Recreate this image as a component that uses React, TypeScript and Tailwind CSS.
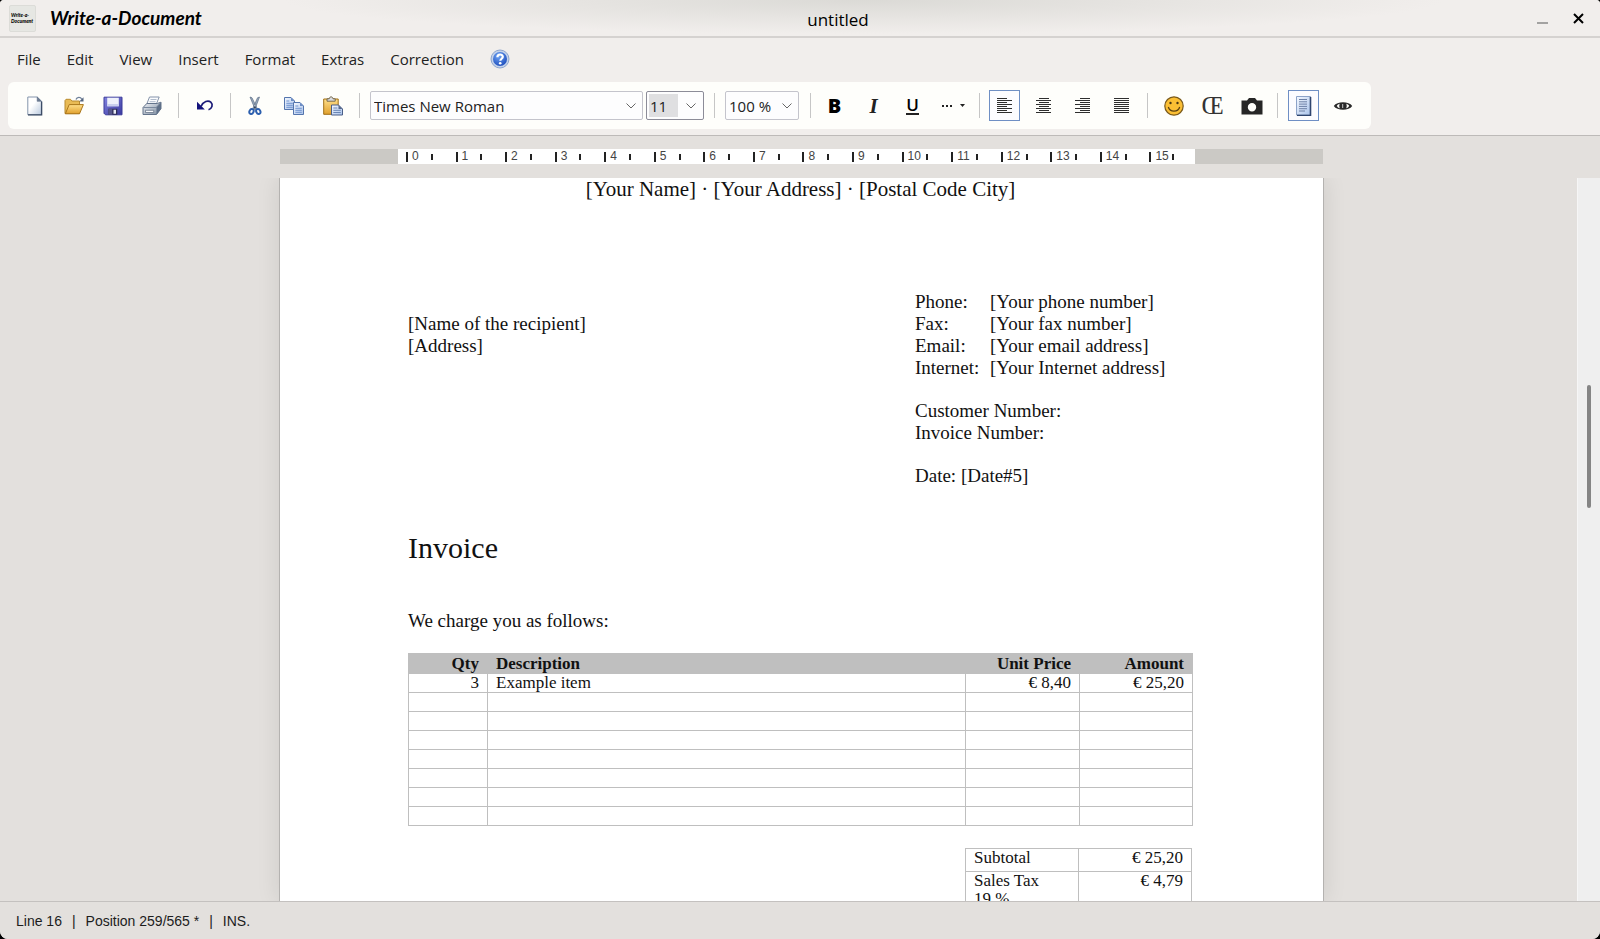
import { useState } from 'react'
import type { ReactNode } from 'react'

const MENUS = ['File', 'Edit', 'View', 'Insert', 'Format', 'Extras', 'Correction']

const CONTACT = [
  ['Phone:', '[Your phone number]'],
  ['Fax:', '[Your fax number]'],
  ['Email:', '[Your email address]'],
  ['Internet:', '[Your Internet address]'],
]

const ITEMS = [
  { qty: '3', description: 'Example item', price: '€ 8,40', amount: '€ 25,20' },
  ...Array.from({ length: 7 }, () => ({ qty: '', description: '', price: '', amount: '' })),
]

// ---- toolbar icons (20x20 grid) ----

function Icon({ children }: { children: ReactNode }) {
  return (
    <svg viewBox="0 0 20 20" className="h-5 w-5 shrink-0" fill="none" aria-hidden>
      {children}
    </svg>
  )
}

function IconDefs() {
  return (
    <svg className="absolute h-0 w-0" aria-hidden>
      <defs>
        <linearGradient id="paper" x1="0" y1="0" x2="1" y2="1">
          <stop offset="0.4" stopColor="#ffffff" />
          <stop offset="1" stopColor="#b9c9de" />
        </linearGradient>
        <linearGradient id="sheet" x1="0" y1="0" x2="1" y2="1">
          <stop offset="0" stopColor="#f4f8ff" />
          <stop offset="1" stopColor="#a9c2ea" />
        </linearGradient>
        <linearGradient id="gold" x1="0" y1="0" x2="0" y2="1">
          <stop offset="0" stopColor="#ffdf8a" />
          <stop offset="1" stopColor="#e0a02c" />
        </linearGradient>
        <linearGradient id="disk" x1="0" y1="0" x2="1" y2="1">
          <stop offset="0" stopColor="#8283e0" />
          <stop offset="1" stopColor="#3a3a9e" />
        </linearGradient>
        <linearGradient id="metal" x1="0" y1="0" x2="1" y2="1">
          <stop offset="0" stopColor="#f4f6f9" />
          <stop offset="1" stopColor="#75869b" />
        </linearGradient>
        <radialGradient id="help" cx="0.4" cy="0.3" r="0.8">
          <stop offset="0" stopColor="#6fa4f4" />
          <stop offset="1" stopColor="#1746b8" />
        </radialGradient>
      </defs>
    </svg>
  )
}

function HelpIcon() {
  return (
    <Icon>
      <circle cx="10" cy="10" r="9" fill="#c3d2ea" stroke="#8ea6cf" />
      <circle cx="10" cy="10" r="7" fill="url(#help)" />
      <path d="M7.4 8.2c0-3.6 5.4-3.5 5.4-.4 0 1.9-2.5 2-2.5 4" stroke="#fff" strokeWidth="2.2" />
      <circle cx="10.2" cy="14.2" r="1.3" fill="#fff" />
    </Icon>
  )
}

function NewIcon() {
  return (
    <Icon>
      <path d="M2.8 1h9.4l4.3 4.3v13.4H2.8z" fill="url(#paper)" stroke="#8494ab" />
      <path d="M16.600 5.500v13.400H3" stroke="#3c4c66" strokeWidth="1.400" />
      <path d="M12.200 1v4.300h4.300z" fill="#6b7b92" stroke="#5d6d86" strokeWidth="0.600" />
    </Icon>
  )
}

function OpenIcon() {
  return (
    <Icon>
      <path d="M1 17.500V4.500l1-1.200h4.500l1.300 1.700h7.700v12.500z" fill="#e9bb55" stroke="#b98b2f" />
      <path d="M1.300 17.800L5.200 8.600h14.200l-3.900 9.200z" fill="url(#gold)" stroke="#a9751a" />
      <path d="M12 3.400c1-2.600 4.500-2.700 5.800-.2" stroke="#6d7f99" strokeWidth="1.300" />
      <path d="M19.500 1.200v4.200h-4.200z" fill="#53647f" />
    </Icon>
  )
}

function SaveIcon() {
  return (
    <Icon>
      <path d="M1 1.200h18v17.600H2.500L1 17.300z" fill="url(#disk)" stroke="#3b3b9a" />
      <path d="M4.200 1.700h11.600v8.600H4.200z" fill="#eef1fb" />
      <path d="M4.200 8h11.600v2.300H4.200z" fill="#c9cfee" />
      <path d="M5.500 12.800h8.800v6H5.500z" fill="#2d2d55" />
      <path d="M10.500 13.800h2.500v4h-2.500z" fill="#e6e8f3" />
      <path d="M5.500 12.800h3.800v6H5.500z" fill="#56568c" />
    </Icon>
  )
}

function PrintIcon() {
  return (
    <Icon>
      <path d="M7.500 1h9.700l-3 7.500H4.600z" fill="#fbfcfe" stroke="#8593a9" />
      <path d="M8.500 3.500h6M7.600 5.700h6" stroke="#a7b3c5" strokeWidth="0.900" />
      <path d="M1 11.500l3.800-4h10.400l3.800-1.300v6.500l-4.500 5.800H1z" fill="url(#metal)" stroke="#64748b" />
      <path d="M1.300 11.500h12.900l4.500-5" stroke="#7a899e" />
      <path d="M14.500 11.500v7l4.500-5.700V6.500z" fill="#5e6f87" />
      <path d="M3.500 14.300h8.200v2.200H3.500z" fill="#f8fafc" stroke="#5c6a80" strokeWidth="0.700" />
    </Icon>
  )
}

function UndoIcon() {
  return (
    <Icon>
      <path d="M6 10.500C8.200 5.300 13.200 4 15.800 6.200c2.600 2.500 1.200 6.600-2.300 7.500" stroke="#1c1c78" strokeWidth="1.700" />
      <path d="M2 5.800v7.800h7.800z" fill="#13137c" />
    </Icon>
  )
}

function CutIcon() {
  return (
    <Icon>
      <path d="M5 1l2 .8 5.200 10.700-2 .9zM14.500 1l-2 .8-4.700 10.700 2 .9z" fill="#9aaabd" stroke="#5c6e86" strokeWidth="0.700" />
      <ellipse cx="6.500" cy="15.500" rx="2" ry="2.600" stroke="#2c5fae" strokeWidth="2" transform="rotate(25 6.500 15.500)" />
      <ellipse cx="13.300" cy="15.500" rx="2" ry="2.600" stroke="#2c5fae" strokeWidth="2" transform="rotate(-25 13.300 15.500)" />
      <circle cx="9.900" cy="11.300" r="1" fill="#31435f" />
    </Icon>
  )
}

function Sheet({ x, y }: { x: number; y: number }) {
  return (
    <g transform={`translate(${x} ${y})`}>
      <path d="M0.500 0.500h6.500l3.500 3.500v8.500H0.500z" fill="url(#sheet)" stroke="#5475ad" />
      <path d="M7 0.500V4h3.500z" fill="#6c8dc4" />
      <path d="M2.300 4h3M2.300 6.300h6.500M2.300 8.300h6.500M2.300 10.300h6.500" stroke="#6f93cf" strokeWidth="1" />
    </g>
  )
}

function CopyIcon() {
  return (
    <Icon>
      <Sheet x={0} y={1} />
      <Sheet x={9} y={6} />
    </Icon>
  )
}

function PasteIcon() {
  return (
    <Icon>
      <path d="M0.700 3h14.500v15.300H0.700z" fill="url(#gold)" stroke="#a06f15" />
      <path d="M4 5.200V2.800h2.200C6.500.2 9.700.2 10 2.800h2.200v2.400z" fill="#d9dbe0" stroke="#6c5e3e" strokeWidth="0.900" />
      <path d="M8.500 9h7l4 4v6h-11z" fill="url(#sheet)" stroke="#4a5f88" />
      <path d="M10.300 12h4M10.300 14.300h7.500M10.300 16.500h7.500" stroke="#6a86b5" />
      <path d="M15.500 9v4h4z" fill="#56698c" />
    </Icon>
  )
}

const LINE_YS = [3, 5, 7, 9, 11, 13, 15, 17]

function AlignIcon({ align }: { align: 'left' | 'center' | 'right' | 'justify' }) {
  return (
    <svg viewBox="0 0 20 20" className="h-5 w-5 shrink-0" shapeRendering="crispEdges" aria-hidden>
      {LINE_YS.map((y, i) => {
        const w = align === 'justify' || i % 2 === 1 ? 15 : 10
        const x = align === 'center' ? (w === 15 ? 2 : 5) : align === 'right' ? 17 - w : 2
        return <rect key={y} x={x} y={y - 1} width={w} height={1} fill="#2e2e2e" />
      })}
    </svg>
  )
}

function SmileyIcon() {
  return (
    <Icon>
      <circle cx="10" cy="10" r="9.200" fill="#fbbf34" stroke="#7a5a1c" strokeWidth="1.200" />
      <circle cx="6.500" cy="7" r="1.200" fill="#4a3511" />
      <circle cx="13.500" cy="7" r="1.200" fill="#4a3511" />
      <path d="M4.300 11c1.700 5.600 9.700 5.600 11.400 0" stroke="#5d4211" strokeWidth="1.300" />
    </Icon>
  )
}

function CameraIcon() {
  return (
    <svg viewBox="0 0 22 18" className="h-[18px] w-[22px]" aria-hidden>
      <path
        fillRule="evenodd"
        fill="#262626"
        d="M0.500 3.500h5.500L8 1h6l2 2.500h5.500v14H0.500zM11 6a4.200 4.200 0 1 0 0 8.400a4.200 4.200 0 1 0 0-8.400z"
      />
    </svg>
  )
}

function PageViewIcon() {
  return (
    <Icon>
      <path d="M2.500 0.500h14v18.500h-14z" fill="url(#sheet)" stroke="#8da3c8" />
      <path d="M16.500 1v18.500H3" stroke="#2f456f" strokeWidth="1.600" />
      <path d="M5 3.500h8M5 5.800h8M5 8.100h8M5 10.400h8M5 12.700h8M5 15h6" stroke="#6d80a6" strokeWidth="1" />
    </Icon>
  )
}

function EyeIcon() {
  return (
    <Icon>
      <path d="M0.800 10C4 5 16 5 19.200 10 16 15 4 15 0.800 10z" fill="#2a2a2a" />
      <path d="M3.800 10c.8-1.300 1.800-1.900 3-2.200-.7 1.400-.7 3 0 4.400-1.200-.3-2.200-.9-3-2.200zM16.200 10c-.8-1.300-1.800-1.900-3-2.200.7 1.400.7 3 0 4.400 1.200-.3 2.200-.9 3-2.200z" fill="#fefefb" />
      <path d="M9.700 8v4" stroke="#c9c9c9" />
    </Icon>
  )
}

function Chevron() {
  return (
    <svg viewBox="0 0 10 6" className="h-[6px] w-[10px] shrink-0" fill="none" aria-hidden>
      <path d="M0.500 0.500L5 5l4.500-4.500" stroke="#666" />
    </svg>
  )
}

// ---- toolbar parts ----

function ToolButton({ label, active, children }: { label: string; active?: boolean; children: ReactNode }) {
  return (
    <button
      type="button"
      title={label}
      aria-label={label}
      className={`flex h-[31px] w-[31px] shrink-0 items-center justify-center border ${active ? 'border-[#6f8fc4] bg-[#fcfcff]' : 'border-transparent hover:bg-[#f0f0f4]'}`}
    >
      {children}
    </button>
  )
}

function Group({ children }: { children: ReactNode }) {
  return <div className="flex items-center gap-2">{children}</div>
}

function Separator({ className = 'mx-[10px]' }: { className?: string }) {
  return <div className={`h-[25px] w-px shrink-0 bg-[#c6c6c6] ${className}`} />
}

function DropDown({ label, options, className }: { label: string; options: string[]; className: string }) {
  return (
    <div className={`relative h-[29px] shrink-0 ${className}`}>
      <select
        aria-label={label}
        className="h-full w-full appearance-none rounded-[2px] border border-[#c4c4cc] bg-[#fdfdfe] pt-[2px] pl-[3px] text-[15px] text-[#222] outline-none"
      >
        {options.map(o => <option key={o}>{o}</option>)}
      </select>
      <span className="pointer-events-none absolute inset-y-0 right-[7px] flex items-center"><Chevron /></span>
    </div>
  )
}

function Toolbar() {
  const [size, setSize] = useState('11')
  return (
    <div className="mx-2 mb-[6px] flex h-[47px] w-fit items-center rounded-md bg-[#fefefb] pr-[13px] pl-[11px]">
      <Group>
        <ToolButton label="New"><NewIcon /></ToolButton>
        <ToolButton label="Open"><OpenIcon /></ToolButton>
        <ToolButton label="Save"><SaveIcon /></ToolButton>
        <ToolButton label="Print"><PrintIcon /></ToolButton>
      </Group>
      <Separator className="mr-[10px] ml-[11px]" />
      <ToolButton label="Undo"><UndoIcon /></ToolButton>
      <Separator className="mr-2 ml-[10px]" />
      <Group>
        <ToolButton label="Cut"><CutIcon /></ToolButton>
        <ToolButton label="Copy"><CopyIcon /></ToolButton>
        <ToolButton label="Paste"><PasteIcon /></ToolButton>
      </Group>
      <Separator className="mr-[10px] ml-[11px]" />
      <div className="flex items-center gap-[3px]">
        <DropDown label="Font" options={['Times New Roman']} className="w-[273px]" />
        <div className="flex h-[29px] w-[58px] items-center justify-between rounded-[2px] border border-[#8c8c98] bg-[#fdfdfe] pr-[7px] pl-[2px]">
          <input
            aria-label="Font size"
            value={size}
            onChange={e => setSize(e.target.value)}
            className="h-[23px] w-[29px] bg-[#dfdfe1] pl-px text-[15px] text-[#222] outline-none"
          />
          <button type="button" aria-label="Choose font size"><Chevron /></button>
        </div>
      </div>
      <Separator />
      <DropDown label="Zoom" options={['100 %']} className="w-[74px]" />
      <Separator className="mr-2 ml-[11px]" />
      <Group>
        <ToolButton label="Bold"><span className="text-[20px] leading-5 font-extrabold">B</span></ToolButton>
        <ToolButton label="Italic">
          <span className="font-['Liberation_Serif',serif] text-[21px] leading-5 font-bold text-[#222] italic">I</span>
        </ToolButton>
        <ToolButton label="Underline">
          <span className="border-b-2 border-[#222] text-[17px] leading-4 font-semibold">U</span>
        </ToolButton>
        <button type="button" aria-label="More formats" className="flex h-[31px] w-[35px] items-center justify-center gap-2">
          <svg viewBox="0 0 10 2" className="h-[2px] w-[10px]" aria-hidden>
            <path d="M0 0h2v2H0zM4 0h2v2H4zM8 0h2v2H8z" fill="#222" />
          </svg>
          <svg viewBox="0 0 5 3" className="h-[3px] w-[5px]" aria-hidden><path d="M0 0h5L2.500 3z" fill="#222" /></svg>
        </button>
      </Group>
      <Separator className="mr-[9px] ml-2" />
      <Group>
        <ToolButton label="Align left" active><AlignIcon align="left" /></ToolButton>
        <ToolButton label="Align center"><AlignIcon align="center" /></ToolButton>
        <ToolButton label="Align right"><AlignIcon align="right" /></ToolButton>
        <ToolButton label="Justify"><AlignIcon align="justify" /></ToolButton>
      </Group>
      <Separator />
      <Group>
        <ToolButton label="Insert emoji"><SmileyIcon /></ToolButton>
        <ToolButton label="Insert symbol">
          <span className="font-['Liberation_Serif',serif] text-[25px] leading-6 text-[#333]">Œ</span>
        </ToolButton>
        <ToolButton label="Insert picture"><CameraIcon /></ToolButton>
      </Group>
      <Separator />
      <Group>
        <ToolButton label="Page view" active><PageViewIcon /></ToolButton>
        <ToolButton label="Preview"><EyeIcon /></ToolButton>
      </Group>
    </div>
  )
}

function TitleBar() {
  return (
    <header className="grid h-[38px] shrink-0 grid-cols-[1fr_auto_1fr] items-center border-b-2 border-[#d5d2d0] bg-[radial-gradient(580px_34px_at_54%_0,#dbdad6,#f1eeec)] pr-4 pl-[9px]">
      <div className="flex items-center gap-[14px]">
        <span className="flex h-[27px] w-[27px] flex-col justify-center rounded-[2px] border border-[#dcdcd8] bg-[#e6e7e3] pl-px font-['Lato',sans-serif] text-[5px] leading-[6px] font-black italic" aria-hidden>
          <span>Write-a-</span>
          <span>Document</span>
        </span>
        <h1 className="font-['Lato',sans-serif] text-[19px] leading-6 font-bold italic">Write-a-Document</h1>
      </div>
      <p className="pt-[3px] pl-[83px] text-[17px] leading-6 font-medium">untitled</p>
      <div className="flex items-center justify-end gap-[25px]">
        <button type="button" aria-label="Minimize">
          <svg viewBox="0 0 11 12" className="h-3 w-[11px]" aria-hidden><path d="M0 11h11" stroke="#888" strokeWidth="1.500" /></svg>
        </button>
        <button type="button" aria-label="Close">
          <svg viewBox="0 0 11 11" className="h-[11px] w-[11px]" aria-hidden>
            <path d="M1 1l9 9M10 1l-9 9" stroke="#000" strokeWidth="2" />
          </svg>
        </button>
      </div>
    </header>
  )
}

function MenuBar() {
  return (
    <nav className="flex h-[44px] shrink-0 items-center gap-[26px] pb-[2px] pl-[17px]">
      {MENUS.map(m => (
        <button key={m} type="button" className="text-[15px] leading-5 text-[#222]">{m}</button>
      ))}
      <button type="button" aria-label="Help"><HelpIcon /></button>
    </nav>
  )
}

// One cell per centimetre; the last one is cut off by the right margin.
function Ruler() {
  return (
    <div className="flex h-[15px] shrink-0 bg-[#cbc9c5] pr-32 pl-[118px]">
      <div className="grid flex-1 grid-cols-[repeat(15,100fr)_92fr] bg-white pl-2">
        {Array.from({ length: 16 }, (_, i) => (
          <div key={i} className="flex min-w-0 items-center">
            <div className="flex w-1/2 items-center gap-[4px]">
              <span className="h-[10px] w-[2px] bg-[#222]" />
              <span className="font-['Liberation_Sans',sans-serif] text-[12px] leading-[15px] text-[#444]">{i}</span>
            </div>
            <span className="h-[6px] w-[2px] bg-[#222]" />
          </div>
        ))}
      </div>
    </div>
  )
}

function Letter() {
  const cell = 'border border-[#bfbfbf] px-2 py-0'
  return (
    <article className="flex-1 border-x border-[#b4b2b0] bg-white pr-[130px] pl-[128px] font-['Liberation_Serif',serif] text-[19px] leading-[22px] text-[#111] shadow-[0_0_22px_rgba(0,0,0,0.1)]">
      <p className="text-center text-[21px]">[Your Name] · [Your Address] · [Postal Code City]</p>

      <div className="mt-[91px] flex justify-between">
        <address className="pt-[22px] not-italic">
          [Name of the recipient]<br />
          [Address]
        </address>
        <div className="w-[278px]">
          <dl className="grid grid-cols-[75px_1fr] whitespace-nowrap">
            {CONTACT.map(([label, value]) => (
              <div key={label} className="contents">
                <dt>{label}</dt>
                <dd>{value}</dd>
              </div>
            ))}
          </dl>
          <p className="mt-[21px]">Customer Number:</p>
          <p>Invoice Number:</p>
          <p className="mt-[21px]">Date: [Date#5]</p>
        </div>
      </div>

      <h2 className="mt-[43px] text-[30px] leading-9">Invoice</h2>
      <p className="mt-[44px]">We charge you as follows:</p>

      <table className="mt-[21px] w-full table-fixed border-collapse text-[17px] leading-[18px]">
        <thead>
          <tr className="h-5 bg-[#bfbfbf]">
            <th className={`${cell} w-[79px] text-right`}>Qty</th>
            <th className={`${cell} text-left`}>Description</th>
            <th className={`${cell} w-[114px] text-right`}>Unit Price</th>
            <th className={`${cell} w-[113px] text-right`}>Amount</th>
          </tr>
        </thead>
        <tbody>
          {ITEMS.map((item, i) => (
            <tr key={i} className="h-[19px]">
              <td className={`${cell} text-right`}>{item.qty}</td>
              <td className={cell}>{item.description}</td>
              <td className={`${cell} text-right`}>{item.price}</td>
              <td className={`${cell} text-right`}>{item.amount}</td>
            </tr>
          ))}
        </tbody>
      </table>

      <table className="mt-[22px] mr-px ml-auto w-[227px] table-fixed border-collapse text-[17px] leading-[18px]">
        <tbody className="align-top">
          <tr className="h-[23px]">
            <td className={cell}>Subtotal</td>
            <td className={`${cell} text-right`}>€ 25,20</td>
          </tr>
          <tr>
            <td className={cell}>Sales Tax<br />19 %</td>
            <td className={`${cell} text-right`}>€ 4,79</td>
          </tr>
        </tbody>
      </table>
    </article>
  )
}

export default function App() {
  return (
    <div className="h-screen bg-black">
      <div className="flex h-full flex-col overflow-hidden rounded-t-[4px] rounded-b-[8px] bg-[#f1eeec] font-['Open_Sans',sans-serif] text-black">
        <IconDefs />
        <TitleBar />
        <MenuBar />
        <Toolbar />
        <main className="flex min-h-0 flex-1 flex-col border-t border-[#bdbab8] bg-[#e3e0dd]">
          <div className="shrink-0 pt-[13px] pr-[277px] pb-[14px] pl-[280px]">
            <Ruler />
          </div>
          <div className="flex min-h-0 flex-1">
            <div className="flex min-w-0 flex-1 overflow-hidden pr-[253px] pl-[279px]">
              <Letter />
            </div>
            <div className="w-[23px] shrink-0 border-l border-[#f6f6f6] bg-[#efefef] pt-[207px] pl-[9px]">
              <div className="h-[123px] w-1 rounded-full bg-[#858585]" />
            </div>
          </div>
        </main>
        <footer className="flex h-[38px] shrink-0 items-center gap-[10px] border-t border-[#c4c1bf] bg-[#e3e0dd] pt-[2px] pl-4 font-['Liberation_Sans',sans-serif] text-[14px] text-[#1c1c1c]">
          <span>Line 16</span>
          <span>|</span>
          <span>Position 259/565 *</span>
          <span>|</span>
          <span>INS.</span>
        </footer>
      </div>
    </div>
  )
}
